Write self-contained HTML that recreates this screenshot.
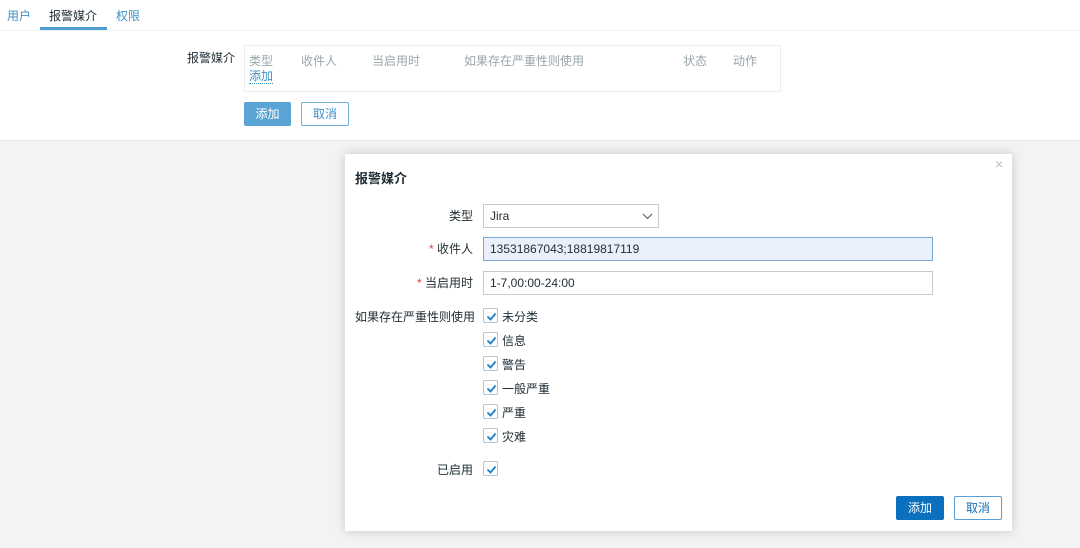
<!DOCTYPE html>
<html><head><meta charset="utf-8"><style>
*{box-sizing:border-box;margin:0;padding:0}
body{width:1080px;height:548px;background:#f2f3f4;font-family:"Liberation Sans","Noto Sans CJK SC",sans-serif;font-size:12px;color:#1f2c33;position:relative;overflow:hidden}
.a{position:absolute;white-space:nowrap}
.top{position:absolute;left:0;top:0;width:1080px;height:141px;background:#fff;border-bottom:1px solid #e6e8ea}
.btn{position:absolute;height:24px;border-radius:2px;text-align:center;line-height:22px;font-size:12px}
.inp{position:absolute;height:24px;border:1px solid #c6cdd1;background:#fff;padding-left:6px;line-height:22px;font-size:12px}
.cb{position:absolute;width:15px;height:15px;border:1px solid #b8c3cb;border-radius:2px;background:#fff}
.cb svg{position:absolute;left:1px;top:1px}
.lbl{position:absolute;white-space:nowrap;text-align:right;width:130px;left:343px}
.star{color:#e0423a}
</style></head><body>
<div class="top"></div>
<div class="a" style="left:7px;top:7px;color:#3e8fc6">用户</div>
<div class="a" style="left:49px;top:7px;color:#1f2c33">报警媒介</div>
<div class="a" style="left:40px;top:27px;width:67px;height:3px;background:#4e9fd1"></div>
<div class="a" style="left:116px;top:7px;color:#3e8fc6">权限</div>
<div class="a" style="left:0;top:30px;width:1080px;height:1px;background:#eef0f1"></div>
<div class="a" style="left:187px;top:49px;color:#1f2c33">报警媒介</div>
<div class="a" style="left:244px;top:45px;width:537px;height:47px;border:1px solid #eceef0"></div>
<div class="a" style="left:249px;top:52px;color:#9aa5ab">类型</div>
<div class="a" style="left:301px;top:52px;color:#9aa5ab">收件人</div>
<div class="a" style="left:372px;top:52px;color:#9aa5ab">当启用时</div>
<div class="a" style="left:464px;top:52px;color:#9aa5ab">如果存在严重性则使用</div>
<div class="a" style="left:683px;top:52px;color:#9aa5ab">状态</div>
<div class="a" style="left:733px;top:52px;color:#9aa5ab">动作</div>
<div class="a" style="left:249px;top:69px;color:#3e8fc6;border-bottom:1px dotted #3e8fc6;line-height:14px">添加</div>
<div class="btn" style="left:244px;top:102px;width:47px;background:#5ba5d6;color:#fff;border:1px solid #5ba5d6">添加</div>
<div class="btn" style="left:301px;top:102px;width:48px;background:#fff;color:#3e8fc6;border:1px solid #6fb0dc">取消</div>

<div class="a" style="left:345px;top:154px;width:667px;height:377px;background:#fff;box-shadow:0 0 10px rgba(0,0,0,.18)"></div>
<div class="a" style="left:995px;top:156px;color:#b6bfc4;font-size:14px">×</div>
<div class="a" style="left:355px;top:168px;font-size:13px;font-weight:bold;color:#1f2c33">报警媒介</div>

<div class="lbl" style="top:207px">类型</div>
<div class="inp" style="left:483px;top:204px;width:176px">Jira<svg style="position:absolute;right:5px;top:8px" width="11" height="7"><path d="M1 1l4.5 4.5L10 1" stroke="#555" fill="none"/></svg></div>
<div class="lbl" style="top:240px"><span class="star">* </span>收件人</div>
<div class="inp" style="left:483px;top:237px;width:450px;background:#eaf0fb;border-color:#7ba7d6">13531867043;18819817119</div>
<div class="lbl" style="top:274px"><span class="star">* </span>当启用时</div>
<div class="inp" style="left:483px;top:271px;width:450px">1-7,00:00-24:00</div>
<div class="a" style="left:355px;top:308px">如果存在严重性则使用</div>

<div class="cb" style="left:483px;top:308px"><svg width="13" height="13"><path d="M2.5 6.5l3 3 5-6" stroke="#1a7fc7" stroke-width="1.8" fill="none"/></svg></div><div class="a" style="left:502px;top:308px">未分类</div>
<div class="cb" style="left:483px;top:332px"><svg width="13" height="13"><path d="M2.5 6.5l3 3 5-6" stroke="#1a7fc7" stroke-width="1.8" fill="none"/></svg></div><div class="a" style="left:502px;top:332px">信息</div>
<div class="cb" style="left:483px;top:356px"><svg width="13" height="13"><path d="M2.5 6.5l3 3 5-6" stroke="#1a7fc7" stroke-width="1.8" fill="none"/></svg></div><div class="a" style="left:502px;top:356px">警告</div>
<div class="cb" style="left:483px;top:380px"><svg width="13" height="13"><path d="M2.5 6.5l3 3 5-6" stroke="#1a7fc7" stroke-width="1.8" fill="none"/></svg></div><div class="a" style="left:502px;top:380px">一般严重</div>
<div class="cb" style="left:483px;top:404px"><svg width="13" height="13"><path d="M2.5 6.5l3 3 5-6" stroke="#1a7fc7" stroke-width="1.8" fill="none"/></svg></div><div class="a" style="left:502px;top:404px">严重</div>
<div class="cb" style="left:483px;top:428px"><svg width="13" height="13"><path d="M2.5 6.5l3 3 5-6" stroke="#1a7fc7" stroke-width="1.8" fill="none"/></svg></div><div class="a" style="left:502px;top:428px">灾难</div>
<div class="lbl" style="top:461px">已启用</div>
<div class="cb" style="left:483px;top:461px"><svg width="13" height="13"><path d="M2.5 6.5l3 3 5-6" stroke="#1a7fc7" stroke-width="1.8" fill="none"/></svg></div>

<div class="btn" style="left:896px;top:496px;width:48px;background:#0b70bd;color:#fff;border:1px solid #0b70bd">添加</div>
<div class="btn" style="left:954px;top:496px;width:48px;background:#fff;color:#1a6fb0;border:1px solid #5a9fd4">取消</div>
</body></html>
